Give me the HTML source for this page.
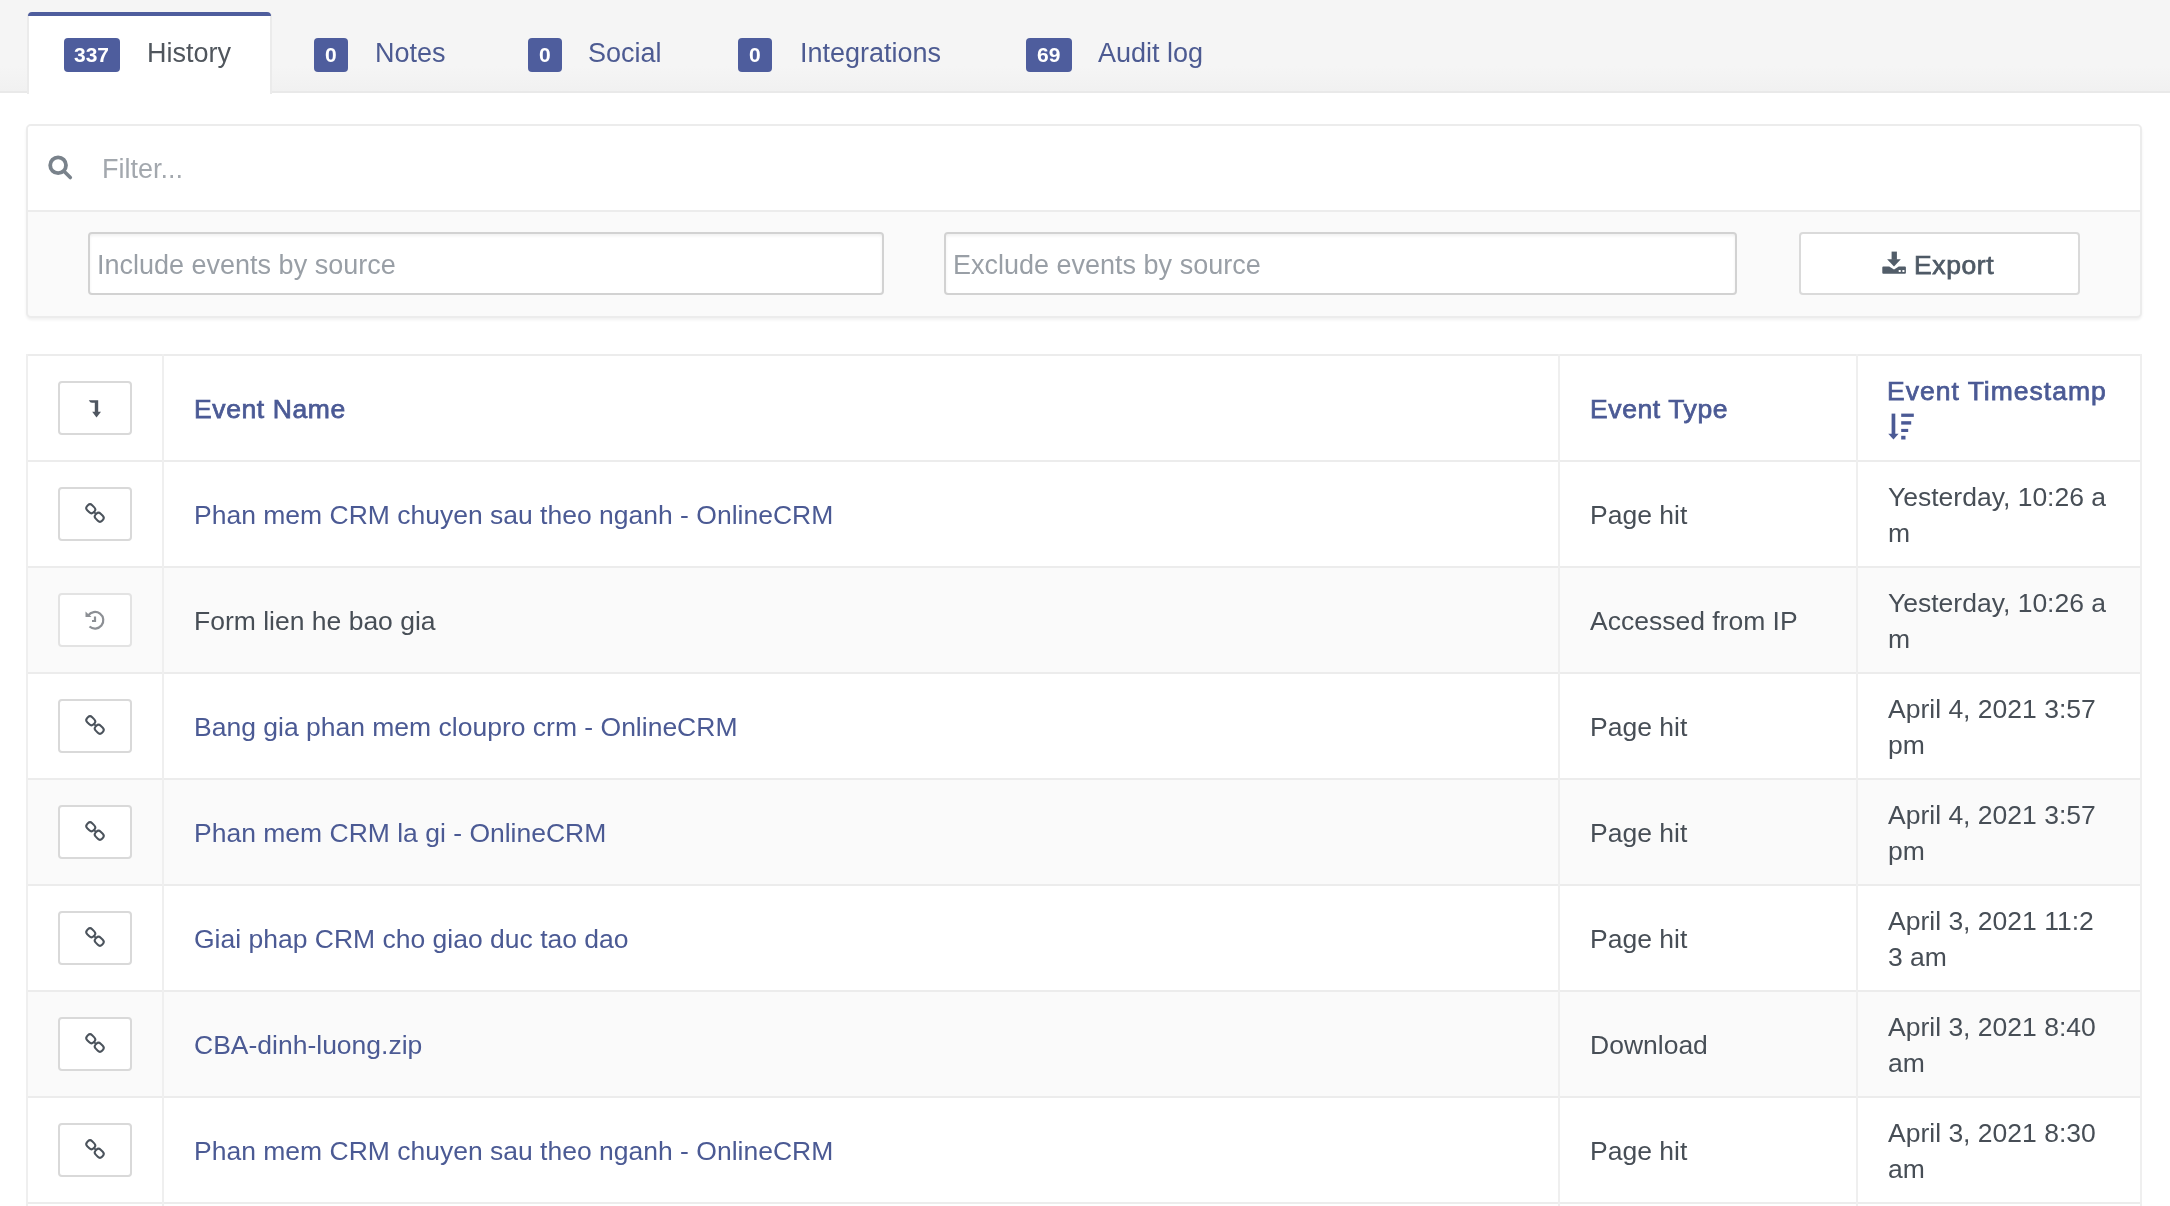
<!DOCTYPE html>
<html><head><meta charset="utf-8">
<style>
*{box-sizing:border-box;margin:0;padding:0}
html,body{width:2170px;height:1206px;overflow:hidden;background:#fff}
body{position:relative;font-family:"Liberation Sans",sans-serif;}
.a{position:absolute}
.t{position:absolute;white-space:nowrap;line-height:36px;will-change:transform}
.badge span{display:inline-block;will-change:transform}
#tabbar{left:0;top:0;width:2170px;height:93px;background:linear-gradient(#f5f5f5 0,#f5f5f5 66px,#f1f1f1 91px);border-bottom:2px solid #e9e9e9}
#acttab{left:27px;top:14px;width:245px;height:80px;background:#fff;border-left:2px solid #ebebeb;border-right:2px solid #ebebeb}
#actbar{left:28px;top:12px;width:243px;height:4px;background:#4e5d9d;border-radius:4px 4px 0 0}
.badge{position:absolute;top:38px;height:34px;background:#4e5d9d;border-radius:4px;color:#fff;font-weight:700;font-size:21px;line-height:34px;text-align:center}
.tab{font-size:27px;top:34.6px;color:#4d5b92}
#panel{left:26px;top:124px;width:2116px;height:194px;border:2px solid #ececec;border-radius:5px;background:#fafafa;box-shadow:0 2px 3px rgba(0,0,0,0.06);overflow:hidden}
#ptop{left:0;top:0;width:2112px;height:86px;background:#fff;border-bottom:2px solid #ececec}
.inp{position:absolute;top:232px;height:63px;border:2px solid #d2d2d2;border-radius:4px;background:#fff;box-shadow:inset 0 2px 3px rgba(0,0,0,0.06)}
.xbtn{position:absolute;top:232px;height:63px;border:2px solid #dadada;border-radius:4px;background:#fff}
.ph{font-size:27px;color:#999fa6;top:246.6px}
#tbl{left:27px;top:354px;width:2114px;height:852px}
.hl{position:absolute;left:27px;width:2114px;height:2px;background:#ececec}
.vl{position:absolute;top:354px;width:2px;height:852px;background:#efefef}
.stripe{position:absolute;left:27px;width:2114px;height:106px;background:#fafafa}
.btn{position:absolute;left:58px;width:74px;height:54px;border:2px solid #d9d9d9;border-radius:4px;background:#fff}
.hd{font-size:26.5px;font-weight:400;color:#4b5a95;-webkit-text-stroke:0.75px #4b5a95;letter-spacing:0.6px}
.lnk{font-size:26.5px;color:#4b5a94}
.txt{font-size:26.5px;color:#474e56}
</style></head>
<body>
<div id="tabbar" class="a"></div>
<div id="acttab" class="a"></div><div id="actbar" class="a"></div>

<div class="badge" style="left:64px;width:56px"><span>337</span></div>
<div class="t tab" style="left:147px;color:#50565d">History</div>
<div class="badge" style="left:314px;width:34px"><span>0</span></div>
<div class="t tab" style="left:375px">Notes</div>
<div class="badge" style="left:528px;width:34px"><span>0</span></div>
<div class="t tab" style="left:587.5px">Social</div>
<div class="badge" style="left:738px;width:34px"><span>0</span></div>
<div class="t tab" style="left:799.5px">Integrations</div>
<div class="badge" style="left:1026px;width:46px"><span>69</span></div>
<div class="t tab" style="left:1098px">Audit log</div>

<div id="panel" class="a"><div id="ptop" class="a"></div></div>
<!-- search icon -->
<svg class="a" style="left:46px;top:153px" width="28" height="28" viewBox="0 0 28 28">
<circle cx="12.1" cy="12.3" r="7.9" fill="none" stroke="#79828b" stroke-width="3.8"/>
<line x1="18" y1="18.2" x2="24.3" y2="24.5" stroke="#79828b" stroke-width="3.6" stroke-linecap="round"/>
</svg>
<div class="t" style="left:101.5px;top:150.6px;font-size:27px;color:#a3a8ae">Filter...</div>

<div class="inp" style="left:88px;width:796px"></div>
<div class="t ph" style="left:97px">Include events by source</div>
<div class="inp" style="left:944px;width:793px"></div>
<div class="t ph" style="left:953px">Exclude events by source</div>
<div class="xbtn" style="left:1799px;width:281px"></div>
<svg class="a" style="left:1880px;top:250px" width="28" height="26" viewBox="0 0 28 26">
<rect x="11.6" y="1.6" width="5.3" height="8.2" fill="#525d69"/>
<polygon points="7.1,9.3 20.8,9.3 14,16.4" fill="#525d69"/>
<path d="M3.3 16.6 H9.2 L14 19.6 L18.8 16.6 H24.9 Q25.9 16.6 25.9 17.6 V22.8 Q25.9 23.8 24.9 23.8 H3.3 Q2.3 23.8 2.3 22.8 V17.6 Q2.3 16.6 3.3 16.6 Z" fill="#525d69"/>
<rect x="18.7" y="20" width="2" height="2" fill="#fff"/><rect x="22.4" y="20" width="2" height="2" fill="#fff"/>
</svg>
<div class="t" style="left:1914px;top:246.8px;font-size:26.5px;color:#4f5a66;-webkit-text-stroke:0.75px #4f5a66;letter-spacing:0.6px">Export</div>

<!-- table -->
<div class="stripe" style="top:567px"></div>
<div class="stripe" style="top:779px"></div>
<div class="stripe" style="top:991px"></div>
<div class="hl" style="top:354px"></div>
<div class="hl" style="top:460px"></div>
<div class="hl" style="top:566px"></div>
<div class="hl" style="top:672px"></div>
<div class="hl" style="top:778px"></div>
<div class="hl" style="top:884px"></div>
<div class="hl" style="top:990px"></div>
<div class="hl" style="top:1096px"></div>
<div class="hl" style="top:1202px"></div>
<div class="vl" style="left:26px"></div>
<div class="vl" style="left:162px"></div>
<div class="vl" style="left:1558px"></div>
<div class="vl" style="left:1856px"></div>
<div class="vl" style="left:2140px"></div>

<div class="btn" style="top:381px"></div>
<svg class="a" style="left:86px;top:398px" width="18" height="22" viewBox="0 0 18 22">
<path d="M2.8 2.2 L12.2 2.2 L12.2 14.5 L8.8 14.5 L8.8 4.8 L6 4.8 Q4 4.8 2.8 2.2 Z" fill="#4f5660"/>
<polygon points="6.2,13.7 15,13.7 10.5,19.4" fill="#4f5660"/>
</svg>
<div class="t hd" style="left:193.5px;top:390.8px">Event Name</div>
<div class="t hd" style="left:1590px;top:390.8px">Event Type</div>
<div class="t hd" style="left:1887px;top:372.8px;letter-spacing:1px">Event Timestamp</div>
<svg class="a" style="left:1888px;top:413px" width="26" height="27" viewBox="0 0 26 27">
<rect x="3.6" y="0.6" width="3.7" height="21" fill="#4b5a95"/>
<polygon points="0.3,20.8 10.6,20.8 5.45,26.6" fill="#4b5a95"/>
<rect x="13.2" y="0.6" width="12.6" height="3.3" fill="#4b5a95"/>
<rect x="13.2" y="8.2" width="10" height="3.4" fill="#4b5a95"/>
<rect x="13.2" y="15.9" width="7" height="3.1" fill="#4b5a95"/>
<rect x="13.2" y="22.8" width="4.3" height="3.7" fill="#4b5a95"/>
</svg>

<div class="btn" style="top:487px"></div>
<svg class="a" style="left:80px;top:498px" width="30" height="30" viewBox="0 0 30 30"><g transform="rotate(45 15 15)" fill="none" stroke="#4b535c" stroke-width="2"><rect x="4.5" y="11.5" width="9" height="7" rx="3"/><rect x="16.5" y="11.5" width="9" height="7" rx="3"/><line x1="13" y1="15" x2="17" y2="15"/></g></svg>
<div class="t lnk" style="left:194px;top:496.8px">Phan mem CRM chuyen sau theo nganh - OnlineCRM</div>
<div class="t txt" style="left:1589.5px;top:496.8px">Page hit</div>
<div class="t txt" style="left:1888px;top:478.8px">Yesterday, 10:26 a<br>m</div>
<div class="btn" style="top:593px;border-color:#e3e3e3"></div>
<svg class="a" style="left:80px;top:604px" width="30" height="30" viewBox="0 0 30 30"><g fill="none" stroke="#8c8f94" stroke-width="2.2"><path d="M8.2 11.5 A8.3 8.3 0 1 1 9.5 22.5"/><path d="M15 12.5 V17 H12"/></g><polygon points="5.5,7.5 11.5,13 5.5,13" fill="#8c8f94"/></svg>
<div class="t txt" style="left:194px;top:602.8px">Form lien he bao gia</div>
<div class="t txt" style="left:1589.5px;top:602.8px">Accessed from IP</div>
<div class="t txt" style="left:1888px;top:584.8px">Yesterday, 10:26 a<br>m</div>
<div class="btn" style="top:699px"></div>
<svg class="a" style="left:80px;top:710px" width="30" height="30" viewBox="0 0 30 30"><g transform="rotate(45 15 15)" fill="none" stroke="#4b535c" stroke-width="2"><rect x="4.5" y="11.5" width="9" height="7" rx="3"/><rect x="16.5" y="11.5" width="9" height="7" rx="3"/><line x1="13" y1="15" x2="17" y2="15"/></g></svg>
<div class="t lnk" style="left:194px;top:708.8px">Bang gia phan mem cloupro crm - OnlineCRM</div>
<div class="t txt" style="left:1589.5px;top:708.8px">Page hit</div>
<div class="t txt" style="left:1888px;top:690.8px">April 4, 2021 3:57<br>pm</div>
<div class="btn" style="top:805px"></div>
<svg class="a" style="left:80px;top:816px" width="30" height="30" viewBox="0 0 30 30"><g transform="rotate(45 15 15)" fill="none" stroke="#4b535c" stroke-width="2"><rect x="4.5" y="11.5" width="9" height="7" rx="3"/><rect x="16.5" y="11.5" width="9" height="7" rx="3"/><line x1="13" y1="15" x2="17" y2="15"/></g></svg>
<div class="t lnk" style="left:194px;top:814.8px">Phan mem CRM la gi - OnlineCRM</div>
<div class="t txt" style="left:1589.5px;top:814.8px">Page hit</div>
<div class="t txt" style="left:1888px;top:796.8px">April 4, 2021 3:57<br>pm</div>
<div class="btn" style="top:911px"></div>
<svg class="a" style="left:80px;top:922px" width="30" height="30" viewBox="0 0 30 30"><g transform="rotate(45 15 15)" fill="none" stroke="#4b535c" stroke-width="2"><rect x="4.5" y="11.5" width="9" height="7" rx="3"/><rect x="16.5" y="11.5" width="9" height="7" rx="3"/><line x1="13" y1="15" x2="17" y2="15"/></g></svg>
<div class="t lnk" style="left:194px;top:920.8px">Giai phap CRM cho giao duc tao dao</div>
<div class="t txt" style="left:1589.5px;top:920.8px">Page hit</div>
<div class="t txt" style="left:1888px;top:902.8px">April 3, 2021 11:2<br>3 am</div>
<div class="btn" style="top:1017px"></div>
<svg class="a" style="left:80px;top:1028px" width="30" height="30" viewBox="0 0 30 30"><g transform="rotate(45 15 15)" fill="none" stroke="#4b535c" stroke-width="2"><rect x="4.5" y="11.5" width="9" height="7" rx="3"/><rect x="16.5" y="11.5" width="9" height="7" rx="3"/><line x1="13" y1="15" x2="17" y2="15"/></g></svg>
<div class="t lnk" style="left:194px;top:1026.8px">CBA-dinh-luong.zip</div>
<div class="t txt" style="left:1589.5px;top:1026.8px">Download</div>
<div class="t txt" style="left:1888px;top:1008.8px">April 3, 2021 8:40<br>am</div>
<div class="btn" style="top:1123px"></div>
<svg class="a" style="left:80px;top:1134px" width="30" height="30" viewBox="0 0 30 30"><g transform="rotate(45 15 15)" fill="none" stroke="#4b535c" stroke-width="2"><rect x="4.5" y="11.5" width="9" height="7" rx="3"/><rect x="16.5" y="11.5" width="9" height="7" rx="3"/><line x1="13" y1="15" x2="17" y2="15"/></g></svg>
<div class="t lnk" style="left:194px;top:1132.8px">Phan mem CRM chuyen sau theo nganh - OnlineCRM</div>
<div class="t txt" style="left:1589.5px;top:1132.8px">Page hit</div>
<div class="t txt" style="left:1888px;top:1114.8px">April 3, 2021 8:30<br>am</div>
</body></html>
